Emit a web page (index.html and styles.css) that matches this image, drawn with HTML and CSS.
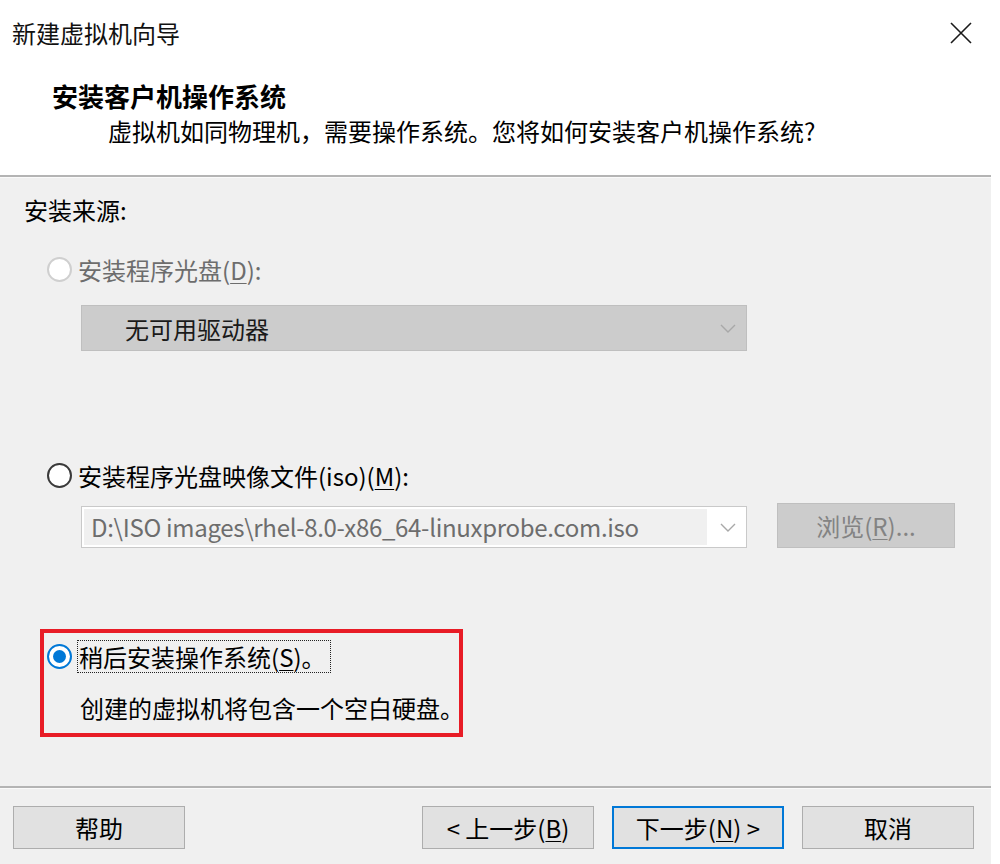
FILE: index.html
```html
<!DOCTYPE html>
<html lang="zh-CN">
<head>
<meta charset="utf-8">
<title>新建虚拟机向导</title>
<link rel="stylesheet" href="styles.css">
</head>
<body>
<div class="dialog">
  <header class="header">
    <div class="titlebar">
      <span class="title">新建虚拟机向导</span>
      <svg class="close" width="22" height="22" viewBox="0 0 22 22"><path d="M1 1 L21 21 M21 1 L1 21" stroke="#1a1a1a" stroke-width="1.6" fill="none"/></svg>
    </div>
    <div class="intro">
      <div class="intro-title">安装客户机操作系统</div>
      <div class="intro-sub">虚拟机如同物理机，需要操作系统。您将如何安装客户机操作系统?</div>
    </div>
  </header>
  <main class="content">
    <div class="group-label">安装来源:</div>
    <div class="option option-disabled"><span class="radio"></span><span>安装程序光盘(<u>D</u>):</span></div>
    <div class="combo combo-disabled">
      <span class="combo-text">无可用驱动器</span>
      <svg class="chev" width="16" height="9" viewBox="0 0 16 9"><polyline points="1,1 8,8 15,1" fill="none" stroke="#a8a8a8" stroke-width="1.4"/></svg>
    </div>
    <div class="option option-iso"><span class="radio radio-dark"></span><span>安装程序光盘映像文件(iso)(<u>M</u>):</span></div>
    <div class="iso-row">
      <div class="combo combo-iso">
        <span class="combo-field">D:\ISO images\rhel-8.0-x86_64-linuxprobe.com.iso</span>
        <svg class="chev" width="16" height="9" viewBox="0 0 16 9"><polyline points="1,1 8,8 15,1" fill="none" stroke="#a8a8a8" stroke-width="1.4"/></svg>
      </div>
      <div class="btn btn-disabled">浏览(<u>R</u>)...</div>
    </div>
    <div class="highlight">
      <div class="option option-checked"><span class="radio radio-on"><span class="dot"></span></span><span class="focus">稍后安装操作系统(<u>S</u>)。</span></div>
      <div class="note">创建的虚拟机将包含一个空白硬盘。</div>
    </div>
  </main>
  <footer class="footer">
    <div class="btn">帮助</div>
    <div class="spacer"></div>
    <div class="btn">&lt; 上一步(<u>B</u>)</div>
    <div class="btn btn-default">下一步(<u>N</u>) &gt;</div>
    <div class="btn">取消</div>
  </footer>
</div>
</body>
</html>
```

FILE: styles.css
```css
* { box-sizing: border-box; }
html, body { margin: 0; padding: 0; background: #ffffff; }
body {
  width: 1000px;
  height: 864px;
  overflow: hidden;
  font-family: "Noto Sans CJK SC", sans-serif;
  font-size: 24px;
  color: #000;
}
u { text-decoration: underline; text-underline-offset: 3px; text-decoration-thickness: 1px; }
.dialog {
  width: 991px;
  height: 864px;
  display: flex;
  flex-direction: column;
  background: #f0f0f0;
}
.header {
  height: 177px;
  background: #fff;
  border-bottom: 2px solid #b4b4b4;
  flex: none;
}
.titlebar {
  height: 66px;
  display: flex;
  align-items: center;
  justify-content: space-between;
  padding: 0 19px 0 12px;
}
.title { font-size: 24px; line-height: 30px; color: #111; }
.close { display: block; margin-bottom: 1px; }
.intro { padding: 12px 0 0 52px; }
.intro-title { font-size: 26px; font-weight: bold; line-height: 36px; }
.intro-sub { padding-left: 56px; line-height: 34px; }

.content {
  height: 609px;
  flex: none;
  border-top: 1px solid #fafafa;
  padding-left: 24px;
  display: flex;
  flex-direction: column;
  align-items: flex-start;
}
.group-label { margin-top: 15px; line-height: 34px; height: 34px; }
.option {
  display: flex;
  align-items: center;
  height: 34px;
  gap: 6px;
  margin-left: 23px;
  white-space: nowrap;
}
.option-disabled { margin-top: 25px; color: #6d6d6d; }
.radio {
  width: 25px;
  height: 25px;
  border-radius: 50%;
  border: 2px solid #cfcfcf;
  background: #fff;
  flex: none;
  display: flex;
  align-items: center;
  justify-content: center;
}
.radio-dark { border-color: #3a3a3a; }
.radio-on { border-color: #0078d7; }
.dot { width: 13px; height: 13px; border-radius: 50%; background: #0078d7; }

.combo {
  display: flex;
  align-items: center;
  justify-content: space-between;
  width: 666px;
  margin-left: 57px;
  padding-right: 10px;
}
.combo-disabled {
  margin-top: 19px;
  height: 46px;
  background: #cccccc;
  border: 1px solid #bfbfbf;
  padding-left: 43px;
  color: #1a1a1a;
}
.option-iso { margin-top: 107px; }
.iso-row { margin-top: 11px; display: flex; align-items: flex-start; }
.combo-iso {
  margin-top: 3px;
  height: 42px;
  background: #fff;
  border: 1px solid #c9c9c9;
  padding-left: 2px;
}
.combo-field {
  width: 623px;
  height: 36px;
  background: #f0f0f0;
  color: #6d6d6d;
  line-height: 36px;
  padding-left: 7px;
  letter-spacing: -0.3px;
  white-space: nowrap;
  overflow: hidden;
}
.btn {
  width: 172px;
  height: 43px;
  background: #e1e1e1;
  border: 1px solid #adadad;
  display: flex;
  align-items: center;
  justify-content: center;
  flex: none;
  white-space: nowrap;
}
.btn-disabled {
  margin-left: 30px;
  width: 178px;
  height: 45px;
  background: #cccccc;
  border-color: #bfbfbf;
  color: #838383;
}
.highlight {
  margin-top: 81px;
  margin-left: 16px;
  width: 423px;
  height: 108px;
  border: 4px solid #e81c26;
  padding: 6px 0 0 3px;
}
.highlight .option { margin-left: 0; gap: 6px; }
.focus {
  outline: 1px dotted #222;
  outline-offset: 0;
  line-height: 31px;
  padding: 0 4px 0 1px;
}
.note { margin-top: 18px; padding-left: 33px; line-height: 34px; white-space: nowrap; }

.footer {
  flex: 1;
  border-top: 2px solid #b4b4b4;
  box-shadow: inset 0 1px 0 #fafafa;
  display: flex;
  align-items: flex-start;
  padding: 18px 17px 0 13px;
  gap: 18px;
}
.spacer { flex: 1; }
.btn-default { border: 2px solid #0078d7; }
```
